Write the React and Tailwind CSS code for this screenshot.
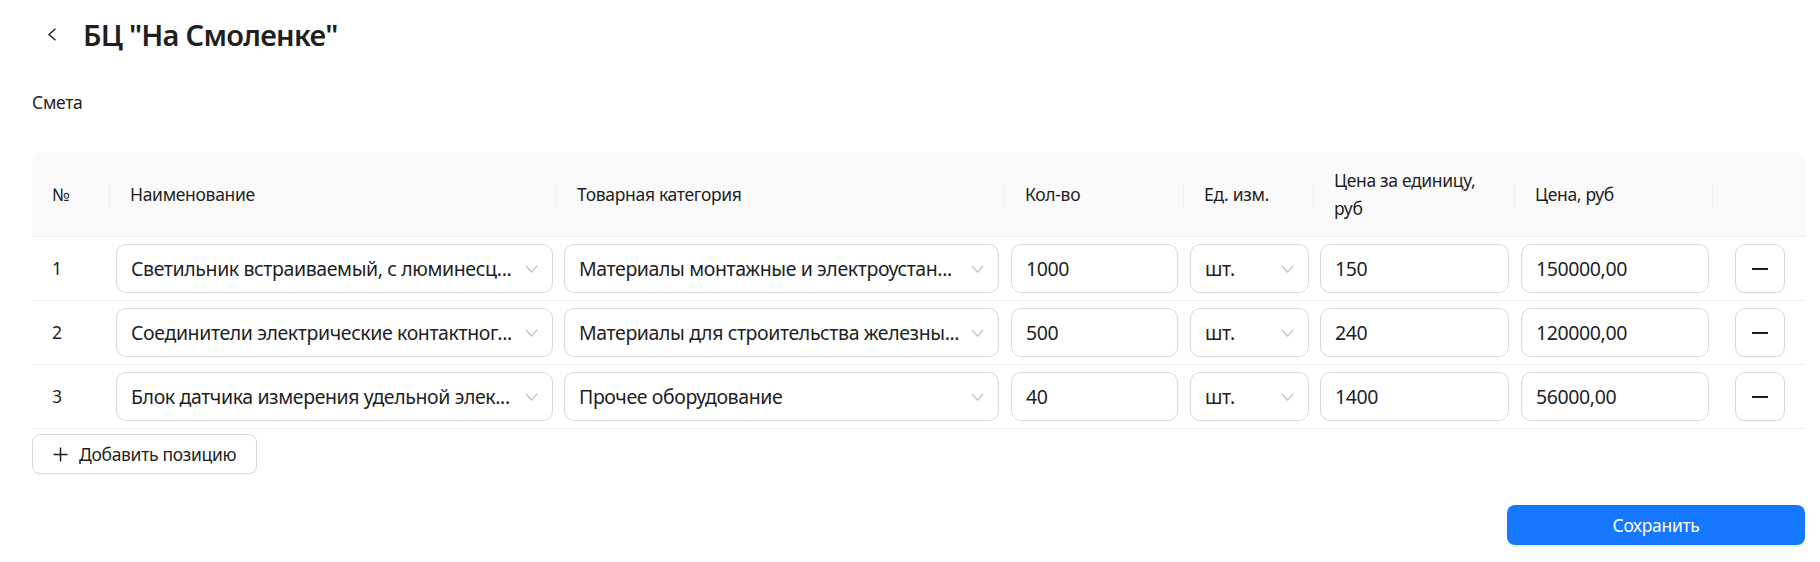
import { useState } from "react";

const rows = [
  { n: 1, name: "Светильник встраиваемый, с люминесц...", cat: "Материалы монтажные и электроустан...", qty: "1000", unit: "шт.", price: "150", total: "150000,00" },
  { n: 2, name: "Соединители электрические контактног...", cat: "Материалы для строительства железны...", qty: "500", unit: "шт.", price: "240", total: "120000,00" },
  { n: 3, name: "Блок датчика измерения удельной элек...", cat: "Прочее оборудование", qty: "40", unit: "шт.", price: "1400", total: "56000,00" },
];

const cols = "grid grid-cols-[78px_447px_448px_179px_130px_201px_198px_1fr]";

function Arrow() {
  return (
    <svg width="13" height="8" viewBox="0 0 13 8" fill="none" className="shrink-0">
      <path d="M0.8 0.8L6.5 7L12.2 0.8" stroke="#bfbfbf" strokeWidth="1.2" strokeLinejoin="round" />
    </svg>
  );
}

function Select({ value }) {
  return (
    <div className="h-[49px] w-full flex items-center justify-between gap-2 pl-[14px] pr-[14px] border border-[#d9d9d9] rounded-[10px] bg-white">
      <span className="truncate text-[19.5px] tracking-[-0.02em] text-[#1f1f1f]">{value}</span>
      <Arrow />
    </div>
  );
}

function Input({ value }) {
  return (
    <div className="h-[49px] w-full flex items-center px-[14px] border border-[#d9d9d9] rounded-[10px] bg-white text-[19.5px] tracking-[-0.02em] text-[#1f1f1f]">
      {value}
    </div>
  );
}

function Th({ children, sep = true }) {
  return (
    <div className="relative flex items-center px-5">
      <span>{children}</span>
      {sep && <span className="absolute right-0 top-1/2 -translate-y-1/2 h-[28px] w-px bg-[#f0f0f0]" />}
    </div>
  );
}

export default function App() {
  const [items] = useState(rows);

  return (
    <div className="min-h-screen bg-white text-[#1f1f1f] pl-8 pr-[15px] tracking-[-0.02em]" style={{ fontFamily: '"Noto Sans", "Open Sans", sans-serif' }}>
      {/* Title */}
      <div className="h-[68px] flex items-center gap-[26px] pl-[15px]">
        <svg width="10" height="13" viewBox="0 0 10 13" fill="none">
          <path d="M8.5 0.8L2 6.5L8.5 12.2" stroke="#1f1f1f" strokeWidth="1.4" />
        </svg>
        <h1 className="text-[29px] font-semibold leading-none tracking-[-0.025em]">БЦ "На Смоленке"</h1>
      </div>

      <div className="mt-[21px] text-[17.5px] leading-[27px]">Смета</div>

      {/* Table */}
      <div className="mt-[36px]">
        <div className={`${cols} bg-[#fafafa] rounded-t-[10px] border-b border-[#f0f0f0] py-[15px] text-[17.5px] leading-[27.5px] h-[85px]`}>
          <Th>№</Th>
          <Th>Наименование</Th>
          <Th>Товарная категория</Th>
          <Th>Кол-во</Th>
          <Th>Ед. изм.</Th>
          <Th>Цена за единицу,<br />руб</Th>
          <Th>Цена, руб</Th>
          <Th sep={false} />
        </div>

        {items.map(r => (
          <div key={r.n} className={`${cols} items-center border-b border-[#f0f0f0] py-[7px]`}>
            <div className="px-5 text-[17.5px]">{r.n}</div>
            <div className="pl-[6px] pr-[4px]"><Select value={r.name} /></div>
            <div className="pl-[7px] pr-[6px]"><Select value={r.cat} /></div>
            <div className="px-[6px]"><Input value={r.qty} /></div>
            <div className="pl-[6px] pr-[5px]"><Select value={r.unit} /></div>
            <div className="px-[6px]"><Input value={r.price} /></div>
            <div className="pl-[6px] pr-[4px]"><Input value={r.total} /></div>
            <div className="pl-[22px]">
              <button className="w-[50px] h-[49px] flex items-center justify-center border border-[#d9d9d9] rounded-[10px] bg-white shadow-[0_2px_0_rgba(0,0,0,0.02)]">
                <span className="block w-[16px] h-[2px] bg-[#1f1f1f]" />
              </button>
            </div>
          </div>
        ))}
      </div>

      <button className="mt-[5px] h-[40px] flex items-center gap-[11px] px-5 border border-[#d9d9d9] rounded-[8px] bg-white text-[17.5px] shadow-[0_2px_0_rgba(0,0,0,0.02)]">
        <svg width="15" height="15" viewBox="0 0 15 15" fill="none">
          <path d="M7.5 0.5V14.5M0.5 7.5H14.5" stroke="#1f1f1f" strokeWidth="1.5" />
        </svg>
        Добавить позицию
      </button>

      <div className="flex justify-end mt-[31px]">
        <button className="w-[298px] h-[40px] rounded-[8px] bg-[#1677ff] text-white text-[17.5px] shadow-[0_2px_0_rgba(5,145,255,0.1)]">
          Сохранить
        </button>
      </div>
    </div>
  );
}
